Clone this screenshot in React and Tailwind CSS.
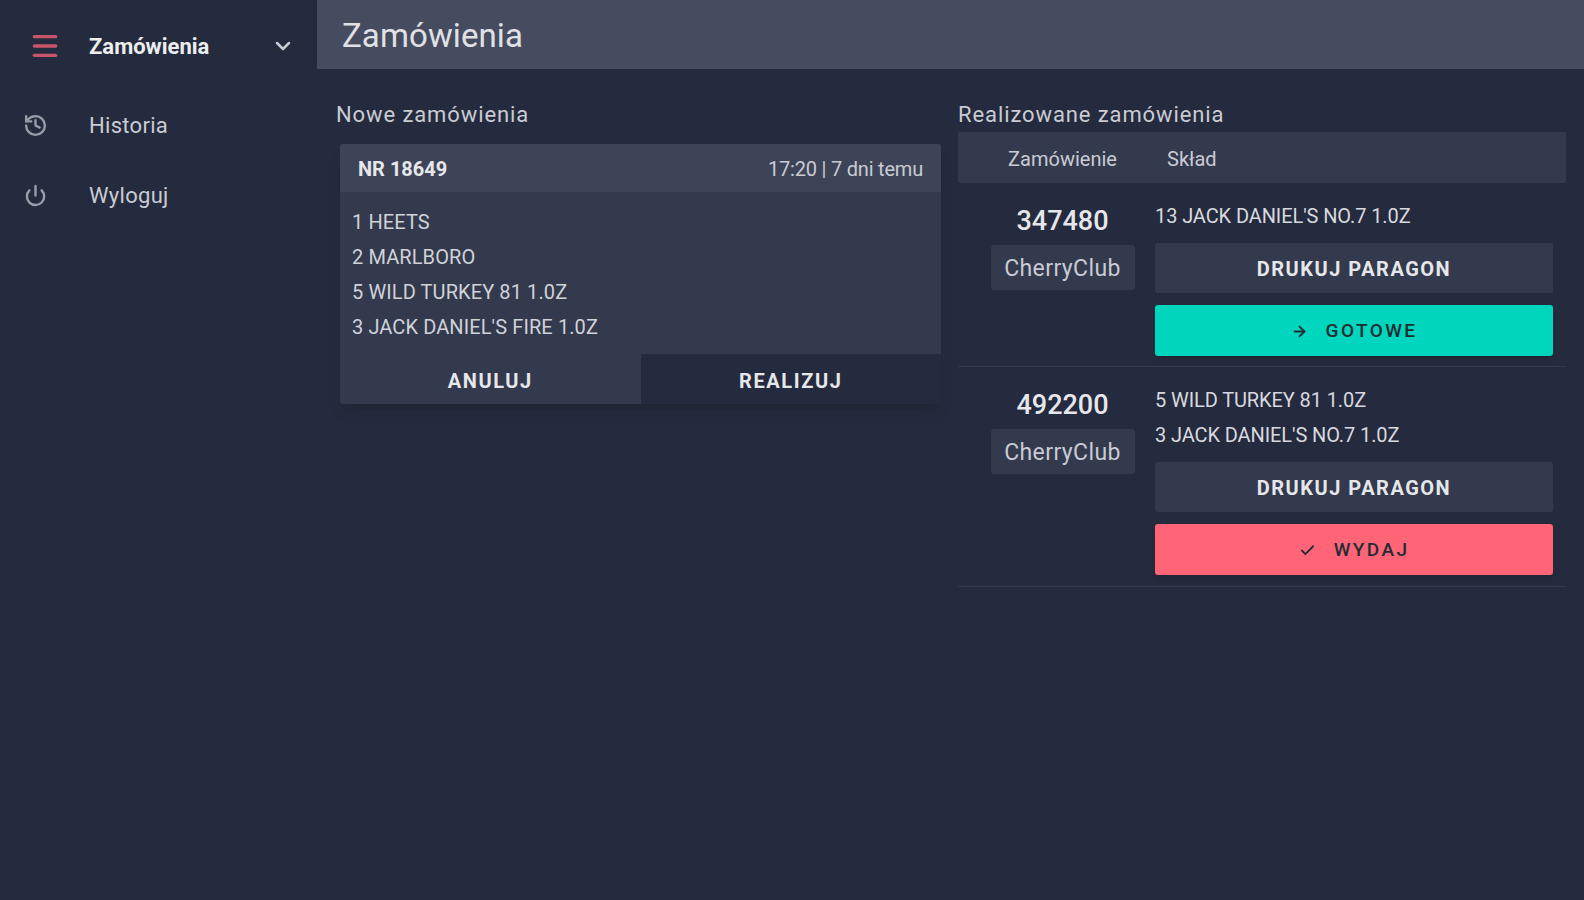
import React from 'react'
import { ChevronDown, History, Power, Menu, ArrowRight, Check } from 'lucide-react'

const newItems = ['1 HEETS', '2 MARLBORO', '5 WILD TURKEY 81 1.0Z', "3 JACK DANIEL'S FIRE 1.0Z"]

function OrderRow({ number, items, action, icon, color, height }) {
  return (
    <div className={`flex border-b border-[#333a4e] ${height}`}>
      <div className="w-[197px] shrink-0 pl-[12px] flex flex-col items-center">
        <div className="mt-[23px] text-[27px] leading-[30px] font-medium text-[#e6e7ea]">{number}</div>
        <div className="mt-[9px] w-[144px] h-[45px] pt-[3px] flex items-center justify-center bg-[#333a4e] rounded-[3px] text-[23px] tracking-[0.4px] text-[#c9cbd3]">CherryClub</div>
      </div>
      <div className="flex-1 pr-[13px]">
        <div className="pt-[16px] flex flex-col">
          {items.map(item => (
            <div key={item} className="h-[35px] leading-[35px] text-[20px] tracking-[-0.1px] text-[#d8d9de]">{item}</div>
          ))}
        </div>
        <button className="mt-[9px] w-full h-[50px] pt-[2px] bg-[#333a4e] rounded-[3px] text-[20px] font-bold tracking-[1.5px] text-[#e6e7ea]">DRUKUJ PARAGON</button>
        <button className={`mt-[12px] w-full h-[51px] pt-[2px] rounded-[3px] shadow-md flex items-center justify-center gap-[18px] text-[19px] font-medium tracking-[2.4px] text-[#1f2d33] ${color}`}>
          {icon}
          {action}
        </button>
      </div>
    </div>
  )
}

export default function App() {
  return (
    <div className="flex min-h-[900px] bg-[#252b3e] font-['Roboto',sans-serif] overflow-hidden">
      <aside className="w-[317px] shrink-0">
        <div className="h-[92px] flex items-center pl-[29px] pr-[22px]">
          <Menu size={32} strokeWidth={2.5} className="text-[#c9556a]" />
          <span className="ml-[28px] flex-1 text-[22px] font-bold text-[#eceded]">Zamówienia</span>
          <ChevronDown size={24} strokeWidth={2.5} className="text-[#c9cbd3]" />
        </div>
        <div className="h-[66px] flex items-center pl-[23px]">
          <History size={25} strokeWidth={2.25} className="text-[#9a9da9]" />
          <span className="ml-[41px] text-[22px] tracking-[0.3px] text-[#c9cbd3]">Historia</span>
        </div>
        <div className="h-[66px] mt-[4px] flex items-center pl-[24px]">
          <Power size={23} strokeWidth={2.5} className="text-[#9a9da9]" />
          <span className="ml-[42px] text-[22px] tracking-[0.3px] text-[#c9cbd3]">Wyloguj</span>
        </div>
      </aside>

      <main className="flex-1 min-w-0">
        <header className="h-[69px] bg-[#464c5f] flex items-center pl-[25px] pt-[2px] text-[33px] tracking-[0.1px] text-[#e0e1e5]">Zamówienia</header>
        <div className="flex">
          <section className="w-[641px] shrink-0 pl-[19px] pr-[16px]">
            <h2 className="mt-[34px] h-[24px] leading-[24px] text-[22px] tracking-[0.9px] font-normal text-[#c9cbd3]">Nowe zamówienia</h2>
            <div className="mt-[17px] ml-[4px] w-[601px] rounded-[3px] bg-[#333a4e] shadow-lg">
              <div className="h-[48px] pt-[2px] bg-[#3e4458] rounded-t-[3px] flex items-center justify-between px-[18px]">
                <span className="text-[20px] font-bold text-[#e6e7ea]">NR 18649</span>
                <span className="text-[20px] tracking-[-0.2px] text-[#c9cbd3]">17:20 | 7 dni temu</span>
              </div>
              <div className="pt-[13px] px-[12px] h-[162px]">
                {newItems.map(item => (
                  <div key={item} className="h-[35px] leading-[35px] text-[20px] tracking-[0.1px] text-[#d0d2d8]">{item}</div>
                ))}
              </div>
              <div className="flex h-[50px]">
                <button className="flex-1 pt-[3px] text-[20px] font-bold tracking-[1.6px] text-[#e6e7ea]">ANULUJ</button>
                <button className="flex-1 pt-[3px] bg-[#252b3e] text-[20px] font-bold tracking-[1.6px] text-[#e6e7ea]">REALIZUJ</button>
              </div>
            </div>
          </section>

          <section className="flex-1 min-w-0 pr-[18px]">
            <h2 className="mt-[34px] h-[24px] leading-[24px] text-[22px] tracking-[0.9px] font-normal text-[#c9cbd3]">Realizowane zamówienia</h2>
            <div className="mt-[5px] h-[51px] pt-[2px] bg-[#333a4e] flex items-center rounded-[2px] text-[20px] text-[#c9cbd3]">
              <span className="w-[209px] text-center">Zamówienie</span>
              <span>Skład</span>
            </div>
            <OrderRow number="347480" items={["13 JACK DANIEL'S NO.7 1.0Z"]} action="GOTOWE" color="bg-[#00d5bd]" height="h-[184px]" icon={<ArrowRight size={17} strokeWidth={2.5} />} />
            <OrderRow number="492200" items={['5 WILD TURKEY 81 1.0Z', "3 JACK DANIEL'S NO.7 1.0Z"]} action="WYDAJ" color="bg-[#ff6477]" height="h-[220px]" icon={<Check size={17} strokeWidth={2.5} />} />
          </section>
        </div>
      </main>
    </div>
  )
}
